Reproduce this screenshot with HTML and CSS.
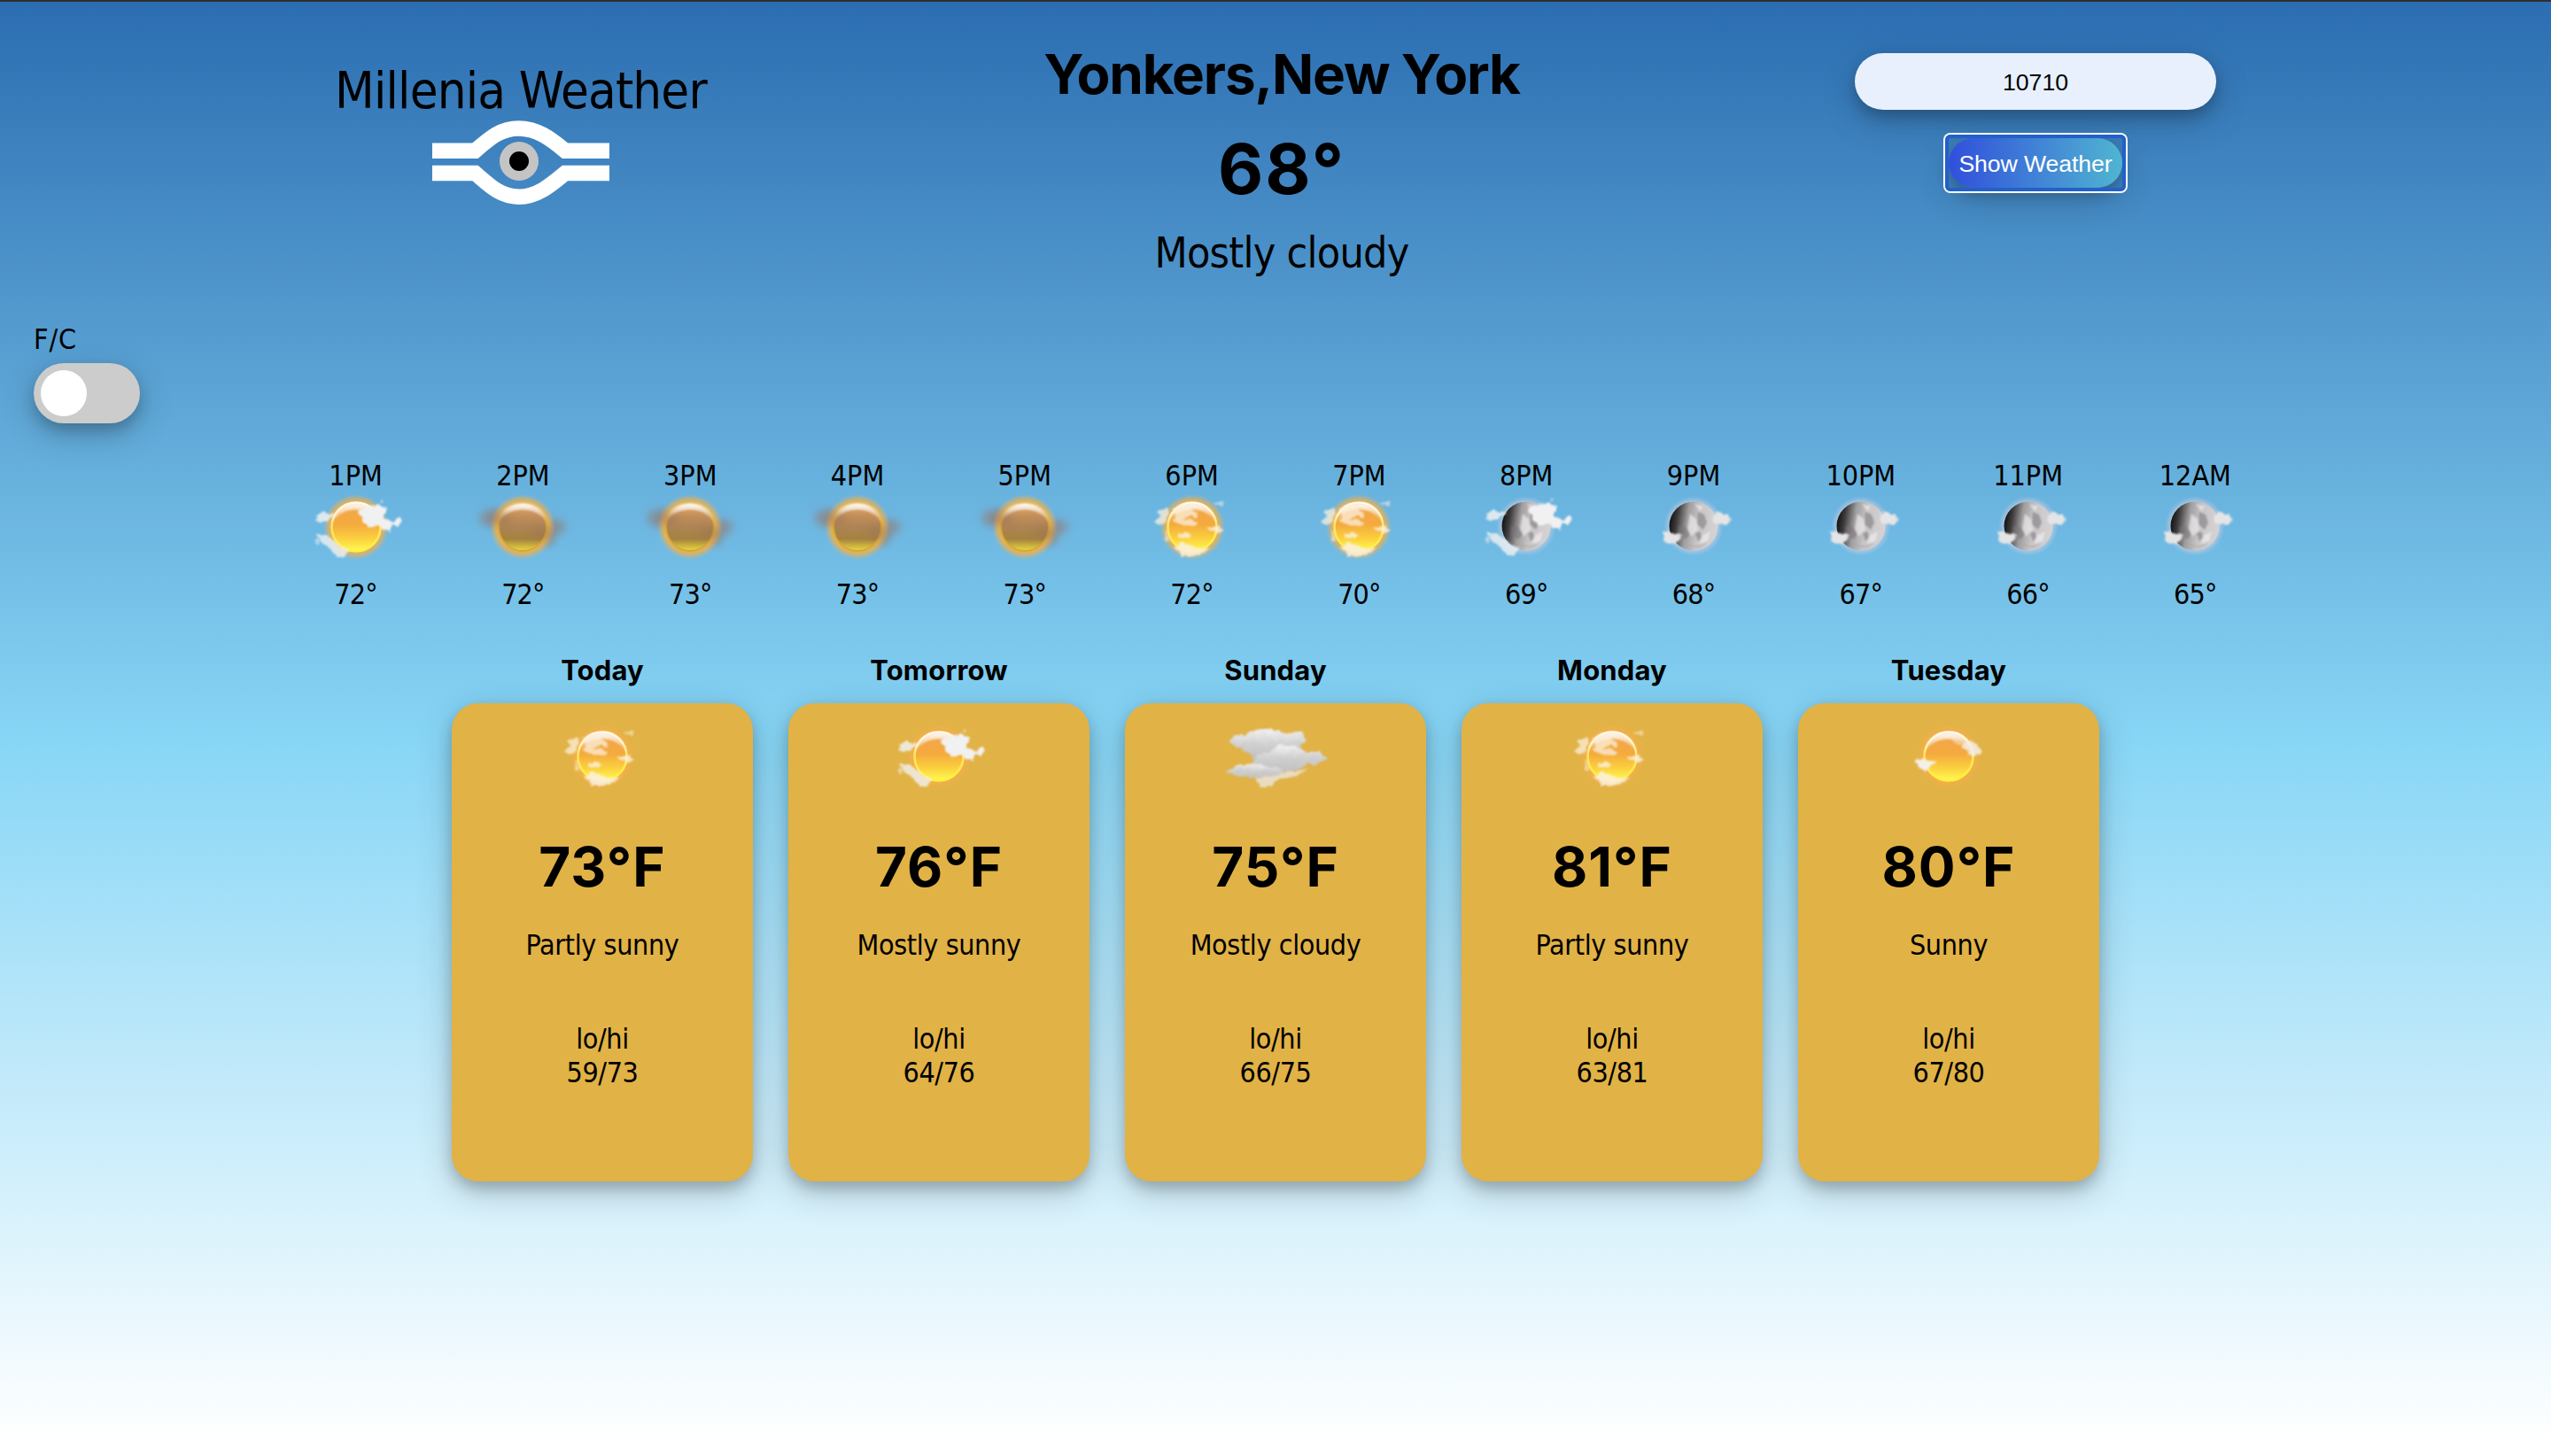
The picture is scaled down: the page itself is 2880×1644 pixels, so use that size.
FILE: index.html
```html
<!DOCTYPE html>
<html lang="en">
<head>
<meta charset="utf-8">
<title>Millenia Weather</title>
<link rel="stylesheet" href="styles.css">
</head>
<body>
<svg class="defs" width="0" height="0" aria-hidden="true">
  <defs>
    <linearGradient id="sunFill" x1="0" y1="0" x2="0" y2="1">
      <stop offset="0" stop-color="#f2a44e"/><stop offset=".45" stop-color="#f4aa3e"/><stop offset=".75" stop-color="#fbd23e"/><stop offset="1" stop-color="#fffb52"/>
    </linearGradient>
    <linearGradient id="sunRim" x1="0" y1="0" x2="0" y2="1">
      <stop offset="0" stop-color="#fff6e4"/><stop offset=".5" stop-color="#ffe25a"/><stop offset="1" stop-color="#fff23f"/>
    </linearGradient>
    <linearGradient id="gloss" x1="0" y1="0" x2="0" y2="1">
      <stop offset="0" stop-color="#fff" stop-opacity=".95"/><stop offset="1" stop-color="#fff" stop-opacity="0"/>
    </linearGradient>
    <radialGradient id="sunGlow">
      <stop offset=".7" stop-color="#f5b23c"/><stop offset=".82" stop-color="#f2b04a" stop-opacity=".75"/><stop offset="1" stop-color="#f2b04a" stop-opacity="0"/>
    </radialGradient>
    <linearGradient id="hazeFill" x1="0" y1="0" x2="0" y2="1">
      <stop offset="0" stop-color="#e5a866"/><stop offset=".3" stop-color="#bf8c58"/><stop offset=".5" stop-color="#ae8456"/><stop offset=".75" stop-color="#a5823f"/><stop offset="1" stop-color="#ead840"/>
    </linearGradient>
    <linearGradient id="moonFill" x1="0" y1=".4" x2="1" y2=".55">
      <stop offset="0" stop-color="#111"/><stop offset=".15" stop-color="#3d3b3b"/><stop offset=".36" stop-color="#a19ea0"/><stop offset=".6" stop-color="#c9c6c8"/><stop offset="1" stop-color="#d6d3d5"/>
    </linearGradient>
    <radialGradient id="moonGlow">
      <stop offset=".74" stop-color="#e0dce4" stop-opacity=".7"/><stop offset="1" stop-color="#c9c3d4" stop-opacity="0"/>
    </radialGradient>
    <linearGradient id="cloudFill" x1="0" y1="0" x2="0" y2="1">
      <stop offset="0" stop-color="#f2f2f2"/><stop offset=".5" stop-color="#cfcfcf"/><stop offset="1" stop-color="#c2c1bf"/>
    </linearGradient>
    <filter id="b1" x="-30%" y="-30%" width="160%" height="160%"><feGaussianBlur stdDeviation="1"/></filter>
    <filter id="b5" x="-50%" y="-50%" width="200%" height="200%"><feGaussianBlur stdDeviation="5"/></filter>
    <filter id="wisp" x="-30%" y="-30%" width="160%" height="160%" color-interpolation-filters="sRGB">
      <feTurbulence type="fractalNoise" baseFrequency=".13" numOctaves="2" seed="4" result="n"/>
      <feDisplacementMap in="SourceGraphic" in2="n" scale="7" xChannelSelector="R" yChannelSelector="G"/>
      <feGaussianBlur stdDeviation="1.2"/>
    </filter>
    <g id="sun">
      <circle cx="75" cy="45" r="37" fill="url(#sunGlow)"/>
      <circle cx="75" cy="45" r="27.5" fill="url(#sunFill)" stroke="url(#sunRim)" stroke-width="2.6"/>
      <path d="M48 42C48 10 102 10 102 42C95 20 55 20 48 42Z" fill="url(#gloss)" filter="url(#b1)"/>
    </g>
    <g id="moon">
      <circle cx="75" cy="44" r="34" fill="url(#moonGlow)"/>
      <circle cx="75" cy="44" r="27.5" fill="url(#moonFill)"/>
      <g filter="url(#b1)">
        <path d="M80 28l7 3 3 9-4 8-7-6zM58 44l9 1 5 8-6 6-8-5zM77 52l5-2 3 7-5 4z" fill="#767376" opacity=".55"/>
        <path d="M71 30l7 6 2 12-8 8-4-9zM84 55l10-5-3 11-9 3zM76 19l10 3-4 5z" fill="#f2f0f1" opacity=".65"/>
        <path d="M60 58q14 14 31 4q-13 14-31-4z" fill="#8d898c" opacity=".35"/>
      </g>
    </g>
    <g id="bigWisps" fill="#f1f1f1" filter="url(#wisp)" transform="translate(-3 -1)">
      <path d="M81 29l7-6 14-1 9 2 0 12 8 4 8-4 3 4-5 5-8 0 1 6-9-3-8-4-9 3-6-8z"/>
      <path d="M32 33l9-4 8 3 6-1-4 7-8 2-10-2z" opacity=".85"/>
      <path d="M34 55l9 0 9 5 8 8 10 5-4 6-10 0-6-6-7-8-9-6z" opacity=".8"/>
      <circle cx="35" cy="63" r="2.5" opacity=".5"/><circle cx="107" cy="17" r="2" opacity=".5"/>
    </g>
    <symbol id="mostly-sunny" viewBox="0 0 150 90"><use href="#sun"/><use href="#bigWisps"/></symbol>
    <symbol id="partly-sunny" viewBox="0 0 150 90">
      <use href="#sun"/>
      <g fill="#fbf0dc" filter="url(#wisp)" transform="translate(0 -1)">
        <path d="M36 27l9-3 5 7-5 9-7 3-5-4 5-4z" opacity=".75"/>
        <path d="M54 25q9-6 17-4l5 6 7 5-2 4-10-3-5 4 14 3-2 5-17-1-8-5 2-7z" opacity=".75"/>
        <path d="M58 55l12-3 6 4-12 3zM91 47l12-2 8 3-3 4-14-1z" opacity=".85"/>
        <path d="M54 68q8-7 18-2l10 5 14-2-6 6-8 3-18 0z" opacity=".9"/>
        <path d="M100 20l5-1 6-3-2 6-7 1zM44 48l5 4 0 8-4 3z" opacity=".55"/>
      </g>
    </symbol>
    <symbol id="sunny" viewBox="0 0 150 90">
      <use href="#sun"/>
      <g fill="#f3f0ea" filter="url(#wisp)">
        <path d="M88 32l9-4 10 4 6 4-3 6-8 4-6-6z" opacity=".85"/>
        <path d="M38 50l7-3 8 2 9 1-6 6-8 5-8-3z"/>
        <path d="M77 24l11 2 4 5-8 0z" opacity=".5"/>
      </g>
    </symbol>
    <symbol id="hazy" viewBox="0 0 150 90">
      <g filter="url(#b5)" fill="#8f7e7c"><ellipse cx="42" cy="35" rx="16" ry="10" opacity=".65"/><ellipse cx="110" cy="45" rx="14" ry="9" opacity=".65"/><ellipse cx="101" cy="60" rx="12" ry="6" opacity=".6"/></g>
      <circle cx="75" cy="45" r="37" fill="url(#sunGlow)"/>
      <circle cx="75" cy="45" r="27" fill="url(#hazeFill)" stroke="#d8a92f" stroke-width="2"/>
      <path d="M48 42C48 10 102 10 102 42C95 20 55 20 48 42Z" fill="url(#gloss)" filter="url(#b1)"/>
      <g filter="url(#b5)" fill="#9a7354" opacity=".5"><ellipse cx="50" cy="36" rx="12" ry="7"/><ellipse cx="98" cy="52" rx="12" ry="8"/></g>
    </symbol>
    <symbol id="moon-cloudy" viewBox="0 0 150 90"><use href="#moon"/><use href="#bigWisps" y="-2"/></symbol>
    <symbol id="moon-clear" viewBox="0 0 150 90">
      <use href="#moon"/>
      <g fill="#e6e5e6" filter="url(#wisp)" transform="translate(-1 -1)">
        <path d="M97 32l8-3 8 3 5 5-6 6-8 1-6-4z"/><path d="M40 51l8-1 6 4 10 1-5 6-7 5-8-3z"/>
      </g>
    </symbol>
    <symbol id="cloudy" viewBox="0 0 150 90">
      <g filter="url(#wisp)">
        <path d="M50 67l16-3 44-4-14 8-18 3-8 7-12 1z" fill="#e9dcc0"/>
        <path d="M22 26q6-6 18-5q9-7 24-7q12 0 20 5l22-1q4 10-2 15l2 9q-30 12-58 5q-6-8-12-10q-12-2-14-11z" fill="url(#cloudFill)"/>
        <path d="M50 50q4-9 18-9q6-9 20-9q12 0 20 8l14-1q5 5 12 8q-9 8-22 7q-14 10-32 7q-26 2-30-11z" fill="url(#cloudFill)"/>
        <path d="M19 62q10-6 18-7q14-4 26 1q10 1 22 6q-10 7-24 6q-12 3-24-1q-12 0-18-5z" fill="url(#cloudFill)"/>
      </g>
    </symbol>
  </defs>
</svg>

<div class="app">
  <header class="top">
    <div class="brand">
      <h1 class="brand-name">Millenia Weather</h1>
      <svg class="logo" viewBox="0 0 200 96">
        <g fill="none" stroke="#fff" stroke-width="17.4">
          <path d="M0 34.2H48.5C65 20 77 9 97.500 9S133 20 150 34.200H200"/>
          <path d="M0 59.500H48.500C65 73.700 77 86.200 97.500 86.200S133 73.700 150 59.500H200"/>
        </g>
        <circle cx="98" cy="46" r="22" fill="#c4c4c4"/><circle cx="98" cy="46" r="11"/>
      </svg>
    </div>
    <div class="current">
      <h2 class="city">Yonkers,New York</h2>
      <div class="now">68°</div>
      <div class="sky">Mostly cloudy</div>
    </div>
    <form class="search">
      <input class="zip" value="10710" aria-label="Zip code">
      <button class="show" type="button">Show Weather</button>
    </form>
  </header>

  <div class="units">
    <span class="units-label">F/C</span>
    <span class="switch"><span class="knob"></span></span>
  </div>

  <section class="hours">
    <div class="hour"><span>1PM</span><svg><use href="#mostly-sunny"/></svg><span class="deg">72°</span></div>
    <div class="hour"><span>2PM</span><svg><use href="#hazy"/></svg><span class="deg">72°</span></div>
    <div class="hour"><span>3PM</span><svg><use href="#hazy"/></svg><span class="deg">73°</span></div>
    <div class="hour"><span>4PM</span><svg><use href="#hazy"/></svg><span class="deg">73°</span></div>
    <div class="hour"><span>5PM</span><svg><use href="#hazy"/></svg><span class="deg">73°</span></div>
    <div class="hour"><span>6PM</span><svg><use href="#partly-sunny"/></svg><span class="deg">72°</span></div>
    <div class="hour"><span>7PM</span><svg><use href="#partly-sunny"/></svg><span class="deg">70°</span></div>
    <div class="hour"><span>8PM</span><svg><use href="#moon-cloudy"/></svg><span class="deg">69°</span></div>
    <div class="hour"><span>9PM</span><svg><use href="#moon-clear"/></svg><span class="deg">68°</span></div>
    <div class="hour"><span>10PM</span><svg><use href="#moon-clear"/></svg><span class="deg">67°</span></div>
    <div class="hour"><span>11PM</span><svg><use href="#moon-clear"/></svg><span class="deg">66°</span></div>
    <div class="hour"><span>12AM</span><svg><use href="#moon-clear"/></svg><span class="deg">65°</span></div>
  </section>

  <section class="days">
    <div class="day"><h3>Today</h3><div class="card"><svg><use href="#partly-sunny"/></svg><div class="temp">73°F</div><div class="cond">Partly sunny</div><div class="range">lo/hi<br>59/73</div></div></div>
    <div class="day"><h3>Tomorrow</h3><div class="card"><svg><use href="#mostly-sunny"/></svg><div class="temp">76°F</div><div class="cond">Mostly sunny</div><div class="range">lo/hi<br>64/76</div></div></div>
    <div class="day"><h3>Sunday</h3><div class="card"><svg><use href="#cloudy"/></svg><div class="temp">75°F</div><div class="cond">Mostly cloudy</div><div class="range">lo/hi<br>66/75</div></div></div>
    <div class="day"><h3>Monday</h3><div class="card"><svg><use href="#partly-sunny"/></svg><div class="temp">81°F</div><div class="cond">Partly sunny</div><div class="range">lo/hi<br>63/81</div></div></div>
    <div class="day"><h3>Tuesday</h3><div class="card"><svg><use href="#sunny"/></svg><div class="temp">80°F</div><div class="cond">Sunny</div><div class="range">lo/hi<br>67/80</div></div></div>
  </section>
</div>
</body>
</html>
```
FILE: styles.css
```css
:root { --shadow: 0 8px 16px rgba(0, 0, 0, .2), 0 12px 40px rgba(0, 0, 0, .19); }
* { box-sizing: border-box; }
html { height: 100%; }
body {
  margin: 0;
  height: 1644px;
  overflow: hidden;
  color: #000;
  background: linear-gradient(#2b6db1 0%, #88d6f6 51%, #fff 99%);
  border-top: 2px solid #2d2f31;
  font: 32px/38px "DejaVu Sans Condensed", "DejaVu Sans", sans-serif;
  font-stretch: condensed;
  letter-spacing: -0.4px;
}
.defs { position: absolute; }
h1, h2, h3 { margin: 0; }
svg { display: block; }

.top {
  display: grid;
  grid-template-columns: 1147px 600px 1133px;
  height: 364px;
}
.brand { padding: 66px 0 0 29px; display: flex; flex-direction: column; align-items: center; }
.brand-name { font-weight: 400; font-size: 57.6px; line-height: 70px; letter-spacing: -0.83px; }
.logo { width: 200px; height: 96px; margin-top: -2px; }
.current { padding-top: 42px; text-align: center; white-space: nowrap; }
.city, .now, .temp, .day h3 { font-family: Inter, "Liberation Sans", sans-serif; font-weight: 700; font-stretch: normal; }
.city { font-size: 62px; line-height: 80px; letter-spacing: -1.2px; }
.now { font-size: 79px; line-height: 100px; margin-top: 16px; letter-spacing: 1.8px; }
.sky { font-size: 48px; line-height: 58px; margin-top: 16px; letter-spacing: -0.75px; }

.search { display: flex; flex-direction: column; align-items: center; padding: 58px 31px 0 0; gap: 32px; }
.zip, .show { font: 26.67px "Liberation Sans", Arial, sans-serif; letter-spacing: 0; border: 0; text-align: center; padding: 2px 0 0; }
.zip {
  width: 408px; height: 64px; border-radius: 32px;
  background: #e8f0fe; color: #000;
  box-shadow: var(--shadow);
}
.show {
  width: 196px; height: 56px; border-radius: 28px; color: #fff;
  background: linear-gradient(90deg, #314fdb, #50b5d1);
  box-shadow: var(--shadow);
  letter-spacing: -0.1px;
  white-space: nowrap;
  position: relative;
}
.show::after {
  content: "";
  position: absolute;
  inset: -4px;
  border: 4px solid #2360c8;
  border-radius: 6px;
  box-shadow: 0 0 0 2px #fff;
}

.units { display: flex; flex-direction: column; align-items: flex-start; padding-left: 38px; height: 152px; }
.units-label { margin-top: -2px; letter-spacing: 0.9px; }
.switch {
  display: flex; align-items: center;
  width: 120px; height: 68px; margin-top: 8px; padding: 8px; border-radius: 34px;
  background: #ccc;
  box-shadow: var(--shadow);
}
.knob { width: 52px; height: 52px; border-radius: 50%; background: #fff; }

.hours { display: grid; grid-template-columns: repeat(12, 188.8px); justify-content: center; height: 220px; letter-spacing: 0; }
.hour, .day, .card { display: flex; flex-direction: column; align-items: center; }
.hour svg, .card svg { width: 150px; height: 90px; }
.hour svg { margin-top: -6px; }
.deg { margin-top: 12px; letter-spacing: -0.83px; }

.days { display: flex; justify-content: center; gap: 40px; }
.day h3 { font-size: 31px; line-height: 38px; letter-spacing: 0.15px; }
.card {
  width: 340px; height: 540px; margin-top: 18px; padding-top: 15px;
  border-radius: 30px; background: #e1b246; text-align: center;
  box-shadow: var(--shadow);
}
.temp { font-size: 62px; line-height: 76px; margin-top: 42px; letter-spacing: 1px; }
.cond { margin-top: 31px; }
.range { margin-top: 68px; }
```
